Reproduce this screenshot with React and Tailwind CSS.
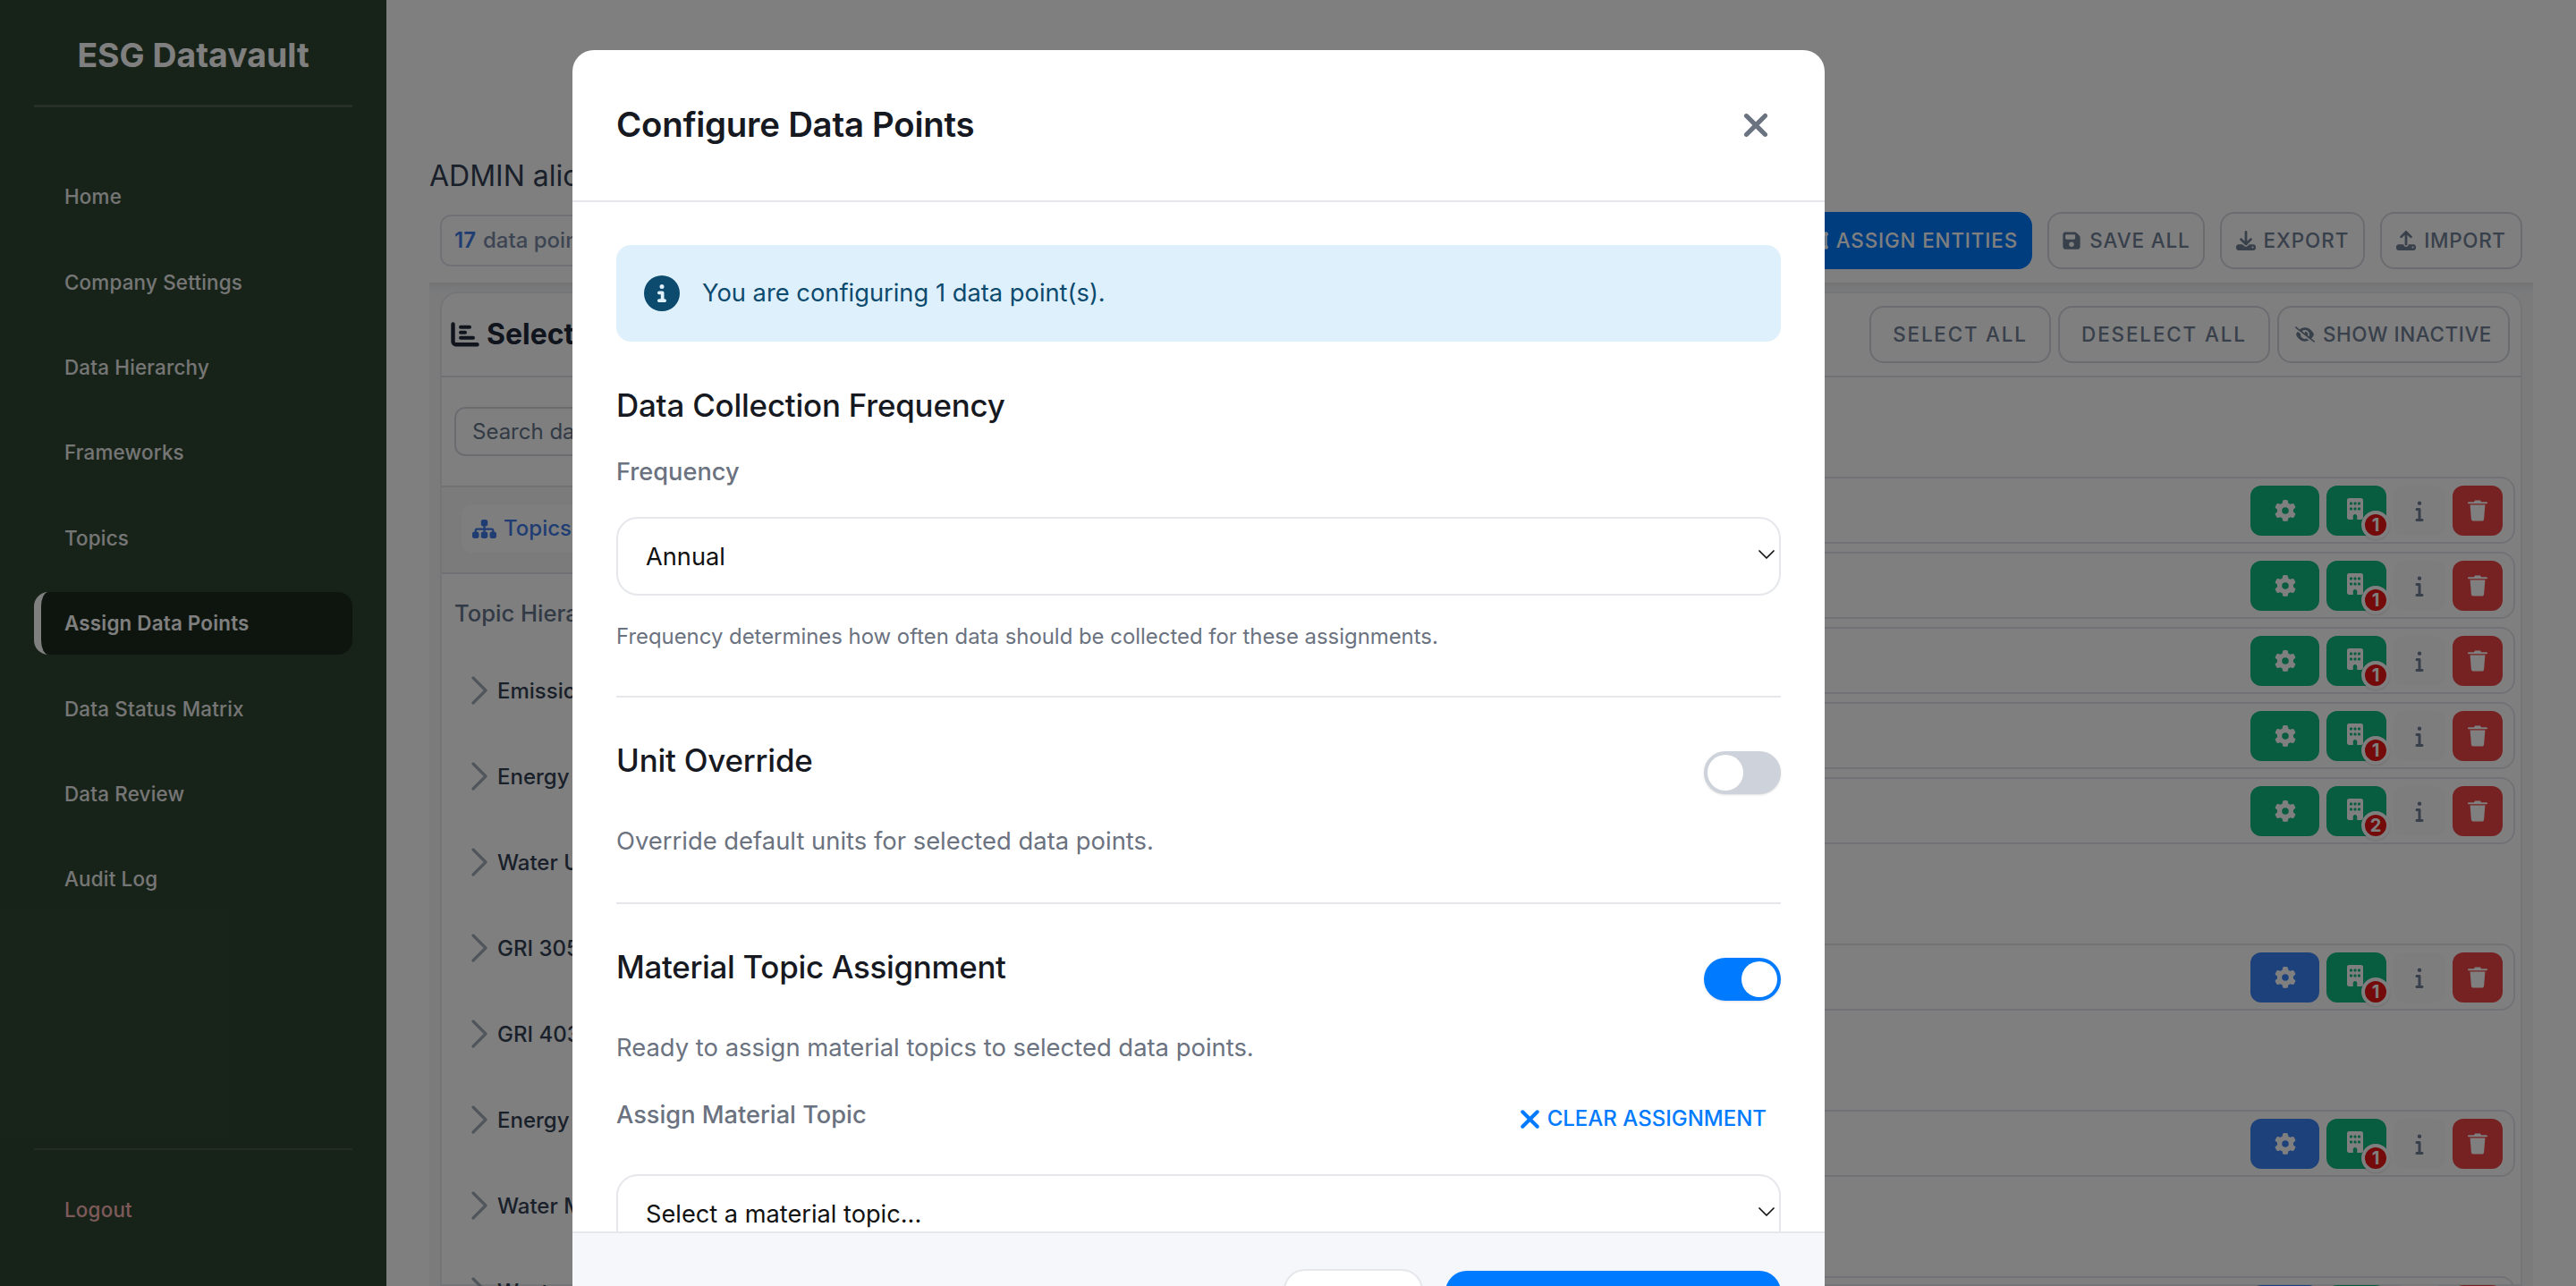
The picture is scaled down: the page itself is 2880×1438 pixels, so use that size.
import {
  FaGear,
  FaBuilding,
  FaInfo,
  FaFloppyDisk,
  FaDownload,
  FaUpload,
  FaEyeSlash,
  FaSitemap,
  FaXmark,
  FaCircleInfo,
  FaObjectGroup,
} from "react-icons/fa6";
import { ChevronRight, ChevronDown } from "lucide-react";

const navItems = [
  "Home",
  "Company Settings",
  "Data Hierarchy",
  "Frameworks",
  "Topics",
  "Assign Data Points",
  "Data Status Matrix",
  "Data Review",
  "Audit Log",
];

const topics = [
  "Emissions",
  "Energy Use",
  "Water Usage",
  "GRI 305: Emissions",
  "GRI 403: Safety",
  "Energy Management",
  "Water Management",
  "Waste",
];

const groups = [
  [
    { gear: "green", count: 1 },
    { gear: "green", count: 1 },
    { gear: "green", count: 1 },
    { gear: "green", count: 1 },
    { gear: "green", count: 2 },
  ],
  [{ gear: "blue", count: 1 }],
  [{ gear: "blue", count: 1 }],
  [{ gear: "blue", count: 1 }],
];

function TrashIcon() {
  return (
    <svg width="22" height="24" viewBox="0 0 22 24" fill="currentColor">
      <path d="M8 0.5h6l1 1.7h6a1 1 0 0 1 0 2H1a1 1 0 0 1 0-2h6z" />
      <path d="M2.6 5.6h16.8l-1.3 16a2 2 0 0 1-2 1.9H5.9a2 2 0 0 1-2-1.9z" />
    </svg>
  );
}

function ListChartIcon() {
  return (
    <svg width="32" height="28" viewBox="0 0 32 28" fill="currentColor">
      <path d="M2.5 2.5V22a3.2 3.2 0 0 0 3.2 3.2H29.5" fill="none" stroke="currentColor" strokeWidth="4.4" strokeLinecap="round" />
      <rect x="9" y="3.8" width="14" height="4" rx="2" />
      <rect x="9" y="9.8" width="9" height="4" rx="2" />
      <rect x="9" y="15.8" width="18" height="4" rx="2" />
    </svg>
  );
}

function Sidebar() {
  return (
    <aside className="w-[432px] h-full shrink-0 bg-[#2f4531] px-[38px] flex flex-col">
      <div className="h-[120px] border-b-[3px] border-white/15 flex items-center justify-center pt-[2px]">
        <span className="text-[37.4px] font-bold text-white leading-none relative top-[2px]">
          ESG Datavault
        </span>
      </div>
      <nav className="mt-[65px] flex flex-col gap-[25.4px]">
        {navItems.map((item) =>
          item === "Assign Data Points" ? (
            <div
              key={item}
              className="h-[70px] rounded-2xl bg-[#1c2a1e] border-l-[8px] border-white pl-[26px] flex items-center text-[22.4px] font-semibold tracking-[0.2px] text-white"
            >
              {item}
            </div>
          ) : (
            <div
              key={item}
              className="h-[70px] pl-[34px] flex items-center text-[22.4px] font-medium tracking-[0.2px] text-white/90"
            >
              {item}
            </div>
          )
        )}
      </nav>
      <div className="mt-auto mb-[50px] border-t-2 border-white/10 pt-[32px]">
        <div className="h-[70px] pl-[34px] flex items-center text-[22.4px] font-medium tracking-[0.2px] text-[#f8b4b4]">
          Logout
        </div>
      </div>
    </aside>
  );
}

function ToolButton({ icon, children, className = "" }) {
  return (
    <button
      className={`h-[64px] px-[12px] rounded-2xl border-2 border-[#d5d9e0] flex items-center justify-center gap-[9px] whitespace-nowrap text-[22.4px] font-medium text-[#718096] ${className}`}
    >
      {icon}
      {children}
    </button>
  );
}

function DataRow({ gear, count }) {
  return (
    <div className="h-[75px] rounded-2xl border-2 border-[#e2e5ea] pr-[12px] flex items-center justify-end gap-[8px]">
      <button
        className={`w-[77px] h-[56px] rounded-xl text-white flex items-center justify-center ${
          gear === "green" ? "bg-[#10b981]" : "bg-[#3b82f6]"
        }`}
      >
        <FaGear className="text-[24px]" />
      </button>
      <button className="relative w-[67px] h-[56px] rounded-xl bg-[#10b981] text-white flex items-center justify-center">
        <FaBuilding className="text-[24px] relative left-[-2px] top-[-2px]" />
        <span className="absolute left-[39px] top-[28px] w-[32px] h-[32px] rounded-full bg-[#e81414] border-[4px] border-white flex items-center justify-center text-[20px] font-bold leading-none shadow-sm">
          {count}
        </span>
      </button>
      <button className="w-[58px] h-[56px] rounded-xl bg-[#fafbfd] text-[#718096] flex items-center justify-center">
        <FaInfo className="text-[24px]" />
      </button>
      <button className="w-[56px] h-[56px] rounded-xl bg-[#ef4444] text-white flex items-center justify-center">
        <TrashIcon />
      </button>
    </div>
  );
}

function Background() {
  return (
    <main className="flex-1 h-full min-w-0 px-[48px] pt-[173px] flex flex-col">
      <div className="text-[32px] leading-[48px] text-[#334155] whitespace-nowrap">ADMIN alice</div>

      <div className="mt-[16px] px-[12px] flex items-center justify-between">
        <div className="h-[58px] w-[560px] rounded-xl border-2 border-[#dfe3ea] px-[14px] flex items-center text-[24px] font-medium text-[#7a8aa5]">
          <span className="font-semibold text-[#3f7be6] mr-[8px]">17</span> data points
        </div>
        <div className="flex items-center gap-[17px]">
          <button className="h-[64px] w-[340px] rounded-2xl bg-[#007bff] text-white flex items-center justify-end gap-[9px] pr-[16px] text-[22.4px] font-medium tracking-[0.87px]">
            <FaObjectGroup className="text-[22px]" />
            ASSIGN ENTITIES
          </button>
          <ToolButton icon={<FaFloppyDisk className="text-[22px]" />} className="w-[176px] tracking-[0.9px]">
            SAVE ALL
          </ToolButton>
          <ToolButton icon={<FaDownload className="text-[22px]" />} className="w-[162px] tracking-[1px]">
            EXPORT
          </ToolButton>
          <ToolButton icon={<FaUpload className="text-[22px]" />} className="w-[159px] tracking-[0.7px]">
            IMPORT
          </ToolButton>
        </div>
      </div>

      {/* Selection card */}
      <div className="mt-[15px] flex-1 min-h-0 bg-[#f6f7f9] shadow-[inset_0_10px_8px_-6px_rgba(0,0,0,0.08)] px-[12px] pt-[10px]">
        <div className="h-full bg-white border-2 border-[#e9ebef] rounded-t-[20px] flex flex-col">
          <div className="h-[94px] shrink-0 border-b-2 border-[#dfe2e8] pl-[10px] pr-[12px] flex items-center justify-between">
            <h2 className="text-[32px] font-bold text-[#1e293b] flex items-center gap-[8px] whitespace-nowrap">
              <ListChartIcon />
              Select Data Points
            </h2>
            <div className="flex items-center gap-[8px]">
              <ToolButton className="w-[203px] tracking-[1.8px]">SELECT ALL</ToolButton>
              <ToolButton className="w-[237px] tracking-[1.9px]">DESELECT ALL</ToolButton>
              <ToolButton icon={<FaEyeSlash className="text-[22px]" />} className="w-[260px] tracking-[0.6px]">
                SHOW INACTIVE
              </ToolButton>
            </div>
          </div>

          <div className="flex-1 min-h-0 flex">
            {/* Topic tree */}
            <div className="w-[520px] shrink-0">
              <div className="h-[123px] border-b-2 border-[#dfe2e8] pl-[14px] flex items-center">
                <div className="w-[480px] h-[55px] rounded-xl border-2 border-[#d5d9e0] px-[18px] flex items-center text-[24px] text-[#64748b]">
                  Search data points...
                </div>
              </div>
              <div className="h-[97px] border-b-2 border-[#dfe2e8] bg-[#f6f7f9] pl-[22px] pt-[19px]">
                <div className="w-[300px] h-[54px] rounded-xl bg-[#fcfdff] px-[12px] flex items-center gap-[8px] text-[24px] font-medium text-[#3f7be6]">
                  <FaSitemap className="text-[27px]" />
                  Topics
                </div>
              </div>
              <div className="pl-[14px] pt-[24px] text-[25.6px] leading-[40px] font-medium text-[#64748b]">
                Topic Hierarchy
              </div>
              <div className="mt-[19px] pl-[14px] flex flex-col">
                {topics.map((topic, index) => (
                  <div key={index} className="h-[96px] flex items-center whitespace-nowrap">
                    <ChevronRight size={56} strokeWidth={1.4} className="text-[#a3acbb] shrink-0 mr-[-8px] relative top-[-1px]" />
                    <span className="text-[24px] font-medium text-[#334155]">{topic}</span>
                  </div>
                ))}
              </div>
            </div>

            {/* Data point rows */}
            <div className="flex-1 min-w-0 pl-[12px] pr-[6px] pt-[111px] flex flex-col gap-[111px]">
              {groups.map((rows, groupIndex) => (
                <div key={groupIndex} className="flex flex-col gap-[9px]">
                  {rows.map((row, rowIndex) => (
                    <DataRow key={rowIndex} gear={row.gear} count={row.count} />
                  ))}
                </div>
              ))}
            </div>
          </div>
        </div>
      </div>
    </main>
  );
}

function Toggle({ on }) {
  return (
    <div
      className={`w-[86px] h-[48px] shrink-0 mt-[12px] rounded-full p-[4px] flex shadow-sm ${
        on ? "bg-[#007bff] justify-end" : "bg-[#ced2da] justify-start"
      }`}
    >
      <div className="w-[40px] h-[40px] rounded-full bg-white"></div>
    </div>
  );
}

function SelectBox({ options, className = "" }) {
  return (
    <div className={`relative ${className}`}>
      <select className="w-full h-[88px] appearance-none rounded-3xl border-2 border-[#e5e7eb] bg-white pl-[31px] pr-[50px] pt-[2px] text-[27.2px] text-[#111111]">
        {options.map((option) => (
          <option key={option}>{option}</option>
        ))}
      </select>
      <ChevronDown
        size={32}
        strokeWidth={1.3}
        className="absolute right-0 top-[26px] text-[#111111]"
      />
    </div>
  );
}

function ConfigureModal() {
  return (
    <div className="absolute inset-0 bg-black/50 flex pl-[640px] pt-[56px]">
      <div className="w-[1400px] h-[1480px] shrink-0 bg-white rounded-3xl flex flex-col">
        <div className="h-[170px] shrink-0 border-b-2 border-[#e5e7eb] pl-[49px] pr-[56px] flex items-center justify-between">
          <h1 className="text-[38.4px] font-semibold text-[#16191f] tracking-[-0.25px]">Configure Data Points</h1>
          <FaXmark className="text-[42px] text-[#6b7280]" />
        </div>

        <div className="h-[1151px] shrink-0 px-[49px] pt-[48px] overflow-hidden">
          <div className="h-[108px] rounded-2xl bg-[#dff0fd] pl-[31px] flex items-center gap-[25px] text-[27.3px] text-[#0c4a6e]">
            <FaCircleInfo className="text-[40px] text-[#0c4a6e]" />
            You are configuring 1 data point(s).
          </div>

          <h3 className="mt-[49px] text-[34.9px] leading-[44px] font-[550] text-[#16191f] tracking-[-0.2px]">
            Data Collection Frequency
          </h3>
          <div className="mt-[33px] text-[27.2px] leading-[40px] font-medium text-[#6b7280]">Frequency</div>
          <SelectBox options={["Annual", "Quarterly", "Monthly"]} className="mt-[30px]" />
          <p className="mt-[28px] text-[23.9px] leading-[36px] text-[#6b7280]">
            Frequency determines how often data should be collected for these assignments.
          </p>
          <div className="mt-[48px] border-t-2 border-[#e5e7eb]"></div>

          <div className="mt-[48px] flex items-start justify-between">
            <h3 className="text-[34.9px] leading-[44px] font-[550] text-[#16191f] tracking-[-0.2px]">Unit Override</h3>
            <Toggle on={false} />
          </div>
          <p className="mt-[32px] text-[27.4px] leading-[40px] text-[#6b7280]">
            Override default units for selected data points.
          </p>
          <div className="mt-[49px] border-t-2 border-[#e5e7eb]"></div>

          <div className="mt-[48px] flex items-start justify-between">
            <h3 className="text-[34.9px] leading-[44px] font-[550] text-[#16191f] tracking-[-0.3px]">
              Material Topic Assignment
            </h3>
            <Toggle on={true} />
          </div>
          <p className="mt-[32px] text-[27.4px] leading-[40px] text-[#6b7280]">
            Ready to assign material topics to selected data points.
          </p>

          <div className="mt-[36px] h-[48px] flex items-start justify-between">
            <div className="text-[27.2px] leading-[40px] font-medium text-[#6b7280]">Assign Material Topic</div>
            <button className="h-[48px] pr-[16px] flex items-center gap-[3px] text-[24px] font-medium text-[#007bff]">
              <FaXmark className="text-[33px]" />
              CLEAR ASSIGNMENT
            </button>
          </div>
          <SelectBox options={["Select a material topic...", "Climate", "Water"]} className="mt-[38px]" />
        </div>

        <div className="flex-1 bg-[#f5f7fb] border-t-2 border-[#e5e7eb] pl-[795px] pr-[49px] pt-[40px] flex items-start gap-[25px]">
          <button className="w-[156px] h-[88px] rounded-3xl border-2 border-[#e5e7eb] bg-white text-[27.2px] text-[#374151]">
            Cancel
          </button>
          <button className="w-[375px] h-[88px] mt-[2px] rounded-3xl bg-[#007bff] text-[27.2px] text-white">
            Apply Configuration
          </button>
        </div>
      </div>
    </div>
  );
}

export default function App() {
  return (
    <div
      className="relative w-full h-screen overflow-hidden flex bg-[#ffffff]"
      style={{ fontFamily: '"Inter", "Liberation Sans", sans-serif' }}
    >
      <Sidebar />
      <Background />
      <ConfigureModal />
    </div>
  );
}
